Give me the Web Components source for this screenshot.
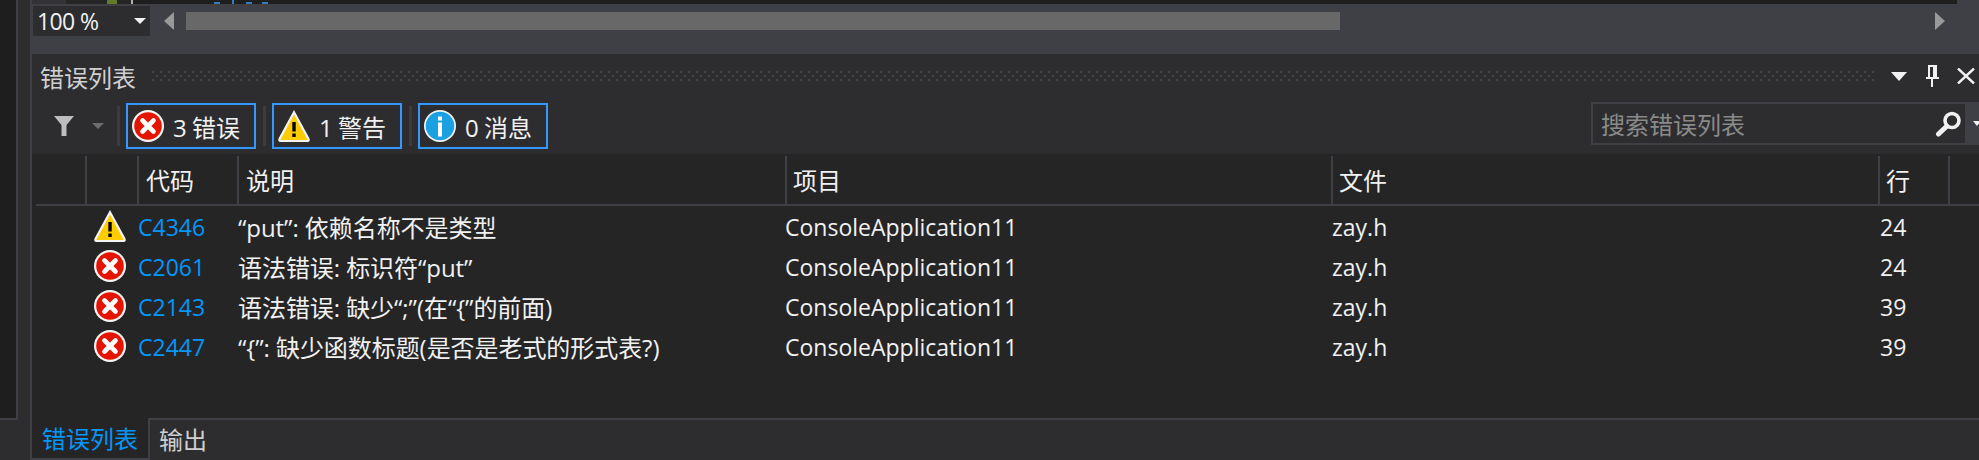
<!DOCTYPE html>
<html><head><meta charset="utf-8"><style>
html,body{margin:0;padding:0;background:#1e1e1e;width:1979px;height:460px;overflow:hidden;font-family:"Open Sans","Noto Sans CJK SC",sans-serif;}
</style></head><body>
<vs-app></vs-app>
<script>
const FONT='"Open Sans","Noto Sans CJK SC",sans-serif';
const ICONS={
 error:`<svg width="32" height="32" viewBox="0 0 32 32"><circle cx="16" cy="16" r="16" fill="#f4f4f4"/><circle cx="16" cy="16" r="13.8" fill="#e51400"/><path d="M10.5 10.5L21.5 21.5M21.5 10.5L10.5 21.5" stroke="#fff" stroke-width="4.6" stroke-linecap="round"/></svg>`,
 warn:`<svg width="32" height="32" viewBox="0 0 32 32"><path d="M16 0L31.5 28.5Q32.5 32 29 32H3Q-.5 32 .5 28.5Z" fill="#f4f4f4"/><path d="M16 4.5L29.5 29.5Q30 30 29 30H3Q2 30 2.500 29.500Z" fill="#ffcc00"/><rect x="14.300" y="12" width="3.400" height="9.500" fill="#000"/><rect x="14.300" y="23.500" width="3.400" height="3.500" fill="#000"/></svg>`,
 info:`<svg width="32" height="32" viewBox="0 0 32 32"><circle cx="16" cy="16" r="16" fill="#f4f4f4"/><circle cx="16" cy="16" r="14.300" fill="#1ba1e2"/><rect x="14" y="6.500" width="4" height="4" fill="#fff"/><rect x="14" y="12.500" width="4" height="14" fill="#fff"/></svg>`
};
function def(name,html,connected){
 customElements.define(name,class extends HTMLElement{
  constructor(){super();this.attachShadow({mode:'open'}).innerHTML=html;}
  connectedCallback(){if(connected)connected(this);}
 });
}
def('vs-icon','<style>:host{display:block;flex:none;width:32px;height:32px}svg{display:block}</style><div></div>',
 el=>{el.shadowRoot.querySelector('div').innerHTML=ICONS[el.getAttribute('name')];});

def('vs-editor-strip',`<style>
:host{display:flex;height:4px;background:#3f3f46;flex:none}
.m{flex:none;width:34px;background:#333337}
.n{flex:1;display:flex;background:#1e1e1e;margin-right:22px}
.a{width:41px;background:#252526}.b{width:10px;background:#637a2a}.c{width:14px;background:#252526}.d{width:2px;background:#b0b0b0}
.bit{width:6px;height:2px;background:#3a7ab8;margin-top:2px}
.v{width:2px;background:#3a7ab8}
</style><div class="m"></div><div class="n"><div class="a"></div><div class="b"></div><div class="c"></div><div class="d"></div><div style="width:81px"></div><div class="bit"></div><div style="width:12px"></div><div class="v"></div><div style="width:12px"></div><div class="bit"></div><div style="width:10px"></div><div class="bit"></div></div>`);

def('vs-scrollbar',`<style>
:host{display:flex;height:50px;background:#3f3f46;box-sizing:border-box;padding:2px 0 0 1px;flex:none}
.combo{box-sizing:border-box;flex:none;width:117px;height:30px;background:#2d2d30;color:#f1f1f1;display:flex;align-items:center;padding:0 4px;justify-content:space-between;font:23px ${FONT};letter-spacing:-.6px}
.dn{width:0;height:0;border:6px solid transparent;border-top:6px solid #f1f1f1;border-bottom:0}
.track{flex:1;display:flex;height:18px;margin-top:6px;padding:0 34px 0 14px;align-items:center}
.l,.r{width:0;height:0;border-style:solid;border-color:transparent;flex:none}
.l{border-width:9px 10px 9px 0;border-right-color:#999}
.r{border-width:9px 0 9px 10px;border-left-color:#999}
.thumb{flex:none;width:1154px;height:18px;background:#686868;margin-left:12px}
.sp{flex:1}
</style><div class="combo"><span>100 %</span><i class="dn"></i></div><div class="track"><i class="l"></i><div class="thumb"></div><div class="sp"></div><i class="r"></i></div>`);

def('vs-titlebar',`<style>
:host{display:flex;align-items:center;height:48px;padding:0 4px 0 8px;box-sizing:border-box;font:24px ${FONT};flex:none}
.t{flex:none;width:96px;line-height:46px;white-space:nowrap;color:#d0d0d0}
.grip{flex:1;height:10px;margin:0 17px 4px 16px;background-image:radial-gradient(circle at 1px 1px,#46464a 1.2px,transparent 1.3px),radial-gradient(circle at 1px 1px,#46464a 1.2px,transparent 1.3px);background-size:8px 8px;background-position:0 0,4px 4px}
.btn{flex:none;display:block}
</style><span class="t">错误列表</span><div class="grip"></div>
<svg class="btn" style="margin-bottom:4px" width="16" height="9" viewBox="0 0 16 9"><path d="M0 0H16L8 9Z" fill="#f1f1f1"/></svg>
<svg class="btn" style="margin:0 0 4px 19px" width="13" height="22" viewBox="0 0 13 22"><path d="M2 0H11V12H13V14H0V12H2ZM4 2V12H7V2Z" fill="#f1f1f1"/><rect x="5" y="14" width="2" height="8" fill="#f1f1f1"/></svg>
<svg class="btn" style="margin:0 0 4px 18px" width="18" height="16" viewBox="0 0 18 16"><path d="M1 0.500L17 15.500M17 0.500L1 15.500" stroke="#f1f1f1" stroke-width="2.400"/></svg>`);

def('vs-filter-btn',`<style>
:host{display:flex;align-items:center;box-sizing:border-box;width:130px;height:46px;border:2px solid #3399ff;padding-left:4px;gap:9px;color:#f1f1f1;font:24px ${FONT};white-space:nowrap;flex:none;word-spacing:-1px}
</style><vs-icon></vs-icon><span><slot></slot></span>`,
 el=>{el.shadowRoot.querySelector('vs-icon').setAttribute('name',el.getAttribute('icon'));
      const i=el.shadowRoot.querySelector('vs-icon');i.shadowRoot.querySelector('div').innerHTML=ICONS[el.getAttribute('icon')];});

def('vs-sep','<style>:host{display:block;flex:none;width:3px;height:40px;background:#3c3c40;margin:0 6px 0 7px}</style>');

def('vs-search',`<style>
:host{display:flex;align-items:center;box-sizing:border-box;width:376px;height:43px;border:2px solid #3f3f46;background:#2d2d30;flex:none;color:#8a8a8a;font:24px ${FONT};padding:0 4px 0 8px;justify-content:space-between;align-self:flex-start;margin-top:-1px}
svg{display:block}
</style><span>搜索错误列表</span><svg width="26" height="26" viewBox="0 0 26 26"><circle cx="17" cy="9.500" r="7" fill="none" stroke="#f1f1f1" stroke-width="3.600"/><path d="M11.500 15.500L3.500 23" stroke="#f1f1f1" stroke-width="5" stroke-linecap="round"/></svg>`);

def('vs-toolbar',`<style>
:host{display:flex;align-items:center;height:52px;padding:1px 0 5px;box-sizing:border-box;flex:none}
.f{margin-left:22px;display:block;flex:none}
.a{margin:0 6px 0 18px;display:block;flex:none}
.g{flex:1}
.tail{flex:none;width:12px;height:43px;background:#3f3f46;display:flex;align-items:center;padding-left:6px;box-sizing:border-box;align-self:flex-start;margin-top:-1px}
.tail i{width:0;height:0;border:4px solid transparent;border-top:5px solid #f1f1f1;border-bottom:0}
</style>
<svg class="f" width="20" height="20" viewBox="0 0 20 20"><path d="M0 0H20L12.500 9V20H7.500V9Z" fill="#bdbdbd"/></svg>
<svg class="a" width="12" height="6" viewBox="0 0 12 6"><path d="M0 0H12L6 6Z" fill="#6d6d6d"/></svg>
<vs-sep></vs-sep><vs-filter-btn icon="error">3 错误</vs-filter-btn>
<vs-sep></vs-sep><vs-filter-btn icon="warn">1 警告</vs-filter-btn>
<vs-sep></vs-sep><vs-filter-btn icon="info">0 消息</vs-filter-btn>
<div class="g"></div><vs-search></vs-search><div class="tail"><i></i></div>`);

def('vs-table-head',`<style>
:host{display:grid;grid-template-columns:49px 52px 100px 548px 546px 547px 70px 1fr;height:52px;background:#252526;color:#f1f1f1;font:24px ${FONT};box-sizing:border-box;border-bottom:2px solid #3f3f46;margin-left:4px;flex:none}
div{border-left:2px solid #3f3f46;margin-top:2px;padding-left:6px;line-height:50px;height:48px;white-space:nowrap}
div:first-of-type{border-left:0}
.o{padding-left:7px}
</style><div></div><div></div><div class="o">代码</div><div class="o">说明</div><div>项目</div><div>文件</div><div>行</div><div></div>`);

def('vs-row',`<style>
:host{display:grid;grid-template-columns:106px 100px 547px 547px 548px 1fr;height:40px;align-items:center;color:#f1f1f1;font:23px ${FONT};white-space:nowrap}
vs-icon{margin:0 0 4px 62px}
span{margin-bottom:3px}
.c{color:#0097fb}
.d{font-size:24px;letter-spacing:-.06px}
</style><vs-icon></vs-icon><span class="c"></span><span class="d"></span><span>ConsoleApplication11</span><span>zay.h</span><span class="n"></span>`,
 el=>{const s=el.shadowRoot;
  s.querySelector('vs-icon').shadowRoot.querySelector('div').innerHTML=ICONS[el.getAttribute('icon')];
  s.querySelector('.c').textContent=el.getAttribute('code');
  s.querySelector('.d').textContent=el.getAttribute('desc');
  s.querySelector('.n').textContent=el.getAttribute('line');});

def('vs-list',`<style>:host{display:block;flex:1;padding-top:2px;min-height:0}</style>
<vs-row icon="warn" code="C4346" desc="“put”: 依赖名称不是类型" line="24"></vs-row>
<vs-row icon="error" code="C2061" desc="语法错误: 标识符“put”" line="24"></vs-row>
<vs-row icon="error" code="C2143" desc="语法错误: 缺少“;”(在“{”的前面)" line="39"></vs-row>
<vs-row icon="error" code="C2447" desc="“{”: 缺少函数标题(是否是老式的形式表?)" line="39"></vs-row>`);

def('vs-tabs',`<style>
:host{display:flex;height:42px;background:#2d2d30;border-top:2px solid #3f3f46;box-sizing:border-box;font:24px ${FONT};flex:none}
.a{flex:none;box-sizing:border-box;width:118px;height:42px;margin-top:-2px;background:#252526;color:#0097fb;border-right:2px solid #3f3f46;border-bottom:2px solid #3f3f46;padding:1px 0 0 10px;line-height:40px;white-space:nowrap}
.b{color:#d0d0d0;margin-left:9px;line-height:40px}
</style><div class="a">错误列表</div><div class="b">输出</div>`);

def('vs-panel',`<style>
:host{display:flex;flex-direction:column;flex:1;background:#2d2d30;min-height:0}
.list{flex:1;display:flex;flex-direction:column;background:#252526;min-height:0}
</style><vs-titlebar></vs-titlebar><vs-toolbar></vs-toolbar><div class="list"><vs-table-head></vs-table-head><vs-list></vs-list></div><vs-tabs></vs-tabs>`);

def('vs-app',`<style>
:host{display:flex;width:1979px;height:460px;background:#1e1e1e;overflow:hidden}
.side{flex:none;width:30px;display:flex;background:#2d2d30}
.s1{flex:none;width:16px;height:418px;background:#1e1e1e;border-bottom:2px solid #3f3f46}
.s2{flex:none;width:2px;height:420px;background:#3f3f46}
.s3{flex:1;background:#2d2d30}
.e{flex:none;width:2px;background:#3f3f46}
.main{flex:1;display:flex;flex-direction:column;min-width:0}
</style><div class="side"><div class="s1"></div><div class="s2"></div><div class="s3"></div></div><div class="e"></div>
<div class="main"><vs-editor-strip></vs-editor-strip><vs-scrollbar></vs-scrollbar><vs-panel></vs-panel></div>`);
</script></body></html>
